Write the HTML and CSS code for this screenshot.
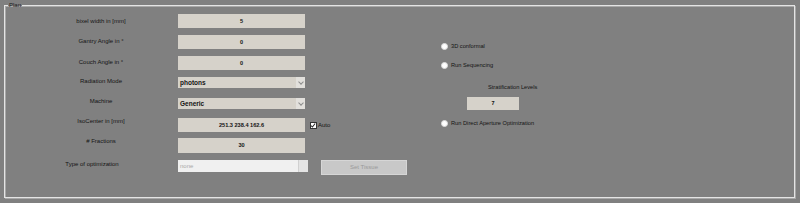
FILE: index.html
```html
<!DOCTYPE html>
<html lang="en">
<head>
  <meta charset="UTF-8">
  <meta name="viewport" content="width=device-width, initial-scale=1.0">
  <title>Plan</title>
  <link rel="stylesheet" href="styles.css">
</head>
<body>
  <fieldset class="panel">
    <legend>Plan</legend>
    <div class="body">
      <div class="form">
        <div class="label first">bixel width in [mm]</div>
        <div class="edit">5</div>
        <div></div>

        <div class="label">Gantry Angle in °</div>
        <div class="edit">0</div>
        <div></div>

        <div class="label">Couch Angle in °</div>
        <div class="edit">0</div>
        <div></div>

        <div class="label mid">Radiation Mode</div>
        <div class="popup"><span>photons</span><i class="arrow"></i></div>
        <div></div>

        <div class="label up">Machine</div>
        <div class="popup"><span>Generic</span><i class="arrow"></i></div>
        <div></div>

        <div class="label up">IsoCenter in [mm]</div>
        <div class="edit">251.3 238.4 162.6</div>
        <label class="check"><span class="box"><svg width="7" height="7" viewBox="0 0 7 7"><path d="M1 3.5 L2.8 5.3 L6 1.2" fill="none" stroke="#222" stroke-width="1.2"/></svg></span>Auto</label>

        <div class="label up"># Fractions</div>
        <div class="edit tall">30</div>
        <div></div>

        <div class="label mid left">Type of optimization</div>
        <div class="popup off"><span>none</span><i class="arrow"></i></div>
        <div class="button">Set Tissue</div>
      </div>

      <div class="options">
        <label class="radio first"><span class="dot"></span>3D conformal</label>
        <label class="radio second"><span class="dot"></span>Run Sequencing</label>
        <div class="strat-label">Stratification Levels</div>
        <div class="edit strat">7</div>
        <label class="radio third"><span class="dot"></span>Run Direct Aperture Optimization</label>
      </div>
    </div>
  </fieldset>
</body>
</html>
```

FILE: styles.css
```css
* {
  margin: 0;
  padding: 0;
  box-sizing: border-box;
}
/* gray MATLAB-like figure */
:root {
  --bg: #808080;
  --field: #d6d2ca;
  --ink: #141414;
}
body {
  width: 800px;
  height: 203px;
  background-color: var(--bg);
  font-family: "Liberation Sans", Arial, sans-serif;
  color: var(--ink);
  overflow: hidden;
}
/* group box */
.panel {
  margin: 1px 5px 0 4px;
  height: 197px;
  border: 1px solid #e4e4e4;
  box-shadow: 1px 1px 0 #a8a8a8, inset 1px 1px 0 #a8a8a8;
  min-width: 0;
}
.panel legend {
  margin-left: 3px;
  padding: 0 1px;
  font-size: 6px;
  line-height: 8px;
  color: #1a1a1a;
}
.body {
  display: flex;
  padding: 5px 0 0 34px;
}
/* labels + fields */
.form {
  display: grid;
  grid-template-columns: 139px 127px 136px;
  grid-template-rows: 21px 21px 21px 21px 20px 20px 22px 15px;
  align-items: start;
}
.label {
  padding-right: 15px;
  text-align: center;
  font-size: 6px;
  line-height: 12px;
}
.label.first {
  margin-top: 1px;
}
.label.mid {
  margin-top: -2px;
}
.label.up {
  margin-top: -3px;
}
.label.left {
  padding-right: 33px;
}
.edit {
  height: 14px;
  background-color: var(--field);
  text-align: center;
  font-size: 5.6px;
  font-weight: bold;
  line-height: 14px;
}
.edit.tall {
  height: 15px;
  line-height: 15px;
}
.popup {
  display: flex;
  align-items: center;
  height: 11px;
  background-color: var(--field);
  font-size: 6.5px;
  font-weight: bold;
  padding-left: 2px;
}
.popup span {
  flex: 1;
}
.popup .arrow {
  width: 9px;
  height: 11px;
  background-color: #e2e0dc;
  position: relative;
}
/* the little chevron in the arrow box */
.popup .arrow::after {
  content: '';
  position: absolute;
  left: 2.5px;
  top: 2.5px;
  width: 3px;
  height: 3px;
  border-right: 1px solid #8c8c8c;
  border-bottom: 1px solid #8c8c8c;
  transform: rotate(45deg);
}
.popup.off {
  width: 130px;
  height: 12px;
  background-color: #f0f0f0;
  color: #a8a8a8;
  font-weight: normal;
  font-size: 6px;
}
.popup.off .arrow {
  height: 12px;
  width: 10px;
  background-color: #e4e4e4;
  border-left: 1px solid #d0d0d0;
}
.popup.off .arrow::after {
  display: none;
}
.check {
  display: flex;
  align-items: center;
  margin: 3px 0 0 5px;
  font-size: 6px;
  line-height: 8px;
}
.check .box {
  display: flex;
  width: 7px;
  height: 7px;
  margin-right: 1px;
  background: #fff;
  border: 1px solid #333;
}
.check .box svg {
  margin: -1px 0 0 -1px;
}
.button {
  margin-left: 16px;
  width: 86px;
  height: 15px;
  background-color: #c8c8c8;
  border: 1px solid #d6d6d6;
  color: #9a9a9a;
  text-align: center;
  font-size: 6px;
  line-height: 13px;
}
/* right column with radios */
.options {
  display: flex;
  flex-direction: column;
  align-items: flex-start;
}
.radio {
  display: flex;
  align-items: center;
  font-size: 5.7px;
  line-height: 8px;
}
.radio .dot {
  width: 7px;
  height: 7px;
  margin-right: 3px;
  border-radius: 50%;
  background: #fff;
  border: 1px solid #dcdcdc;
}
.radio.first {
  margin-top: 28px;
}
.radio.second {
  margin-top: 11px;
}
.radio.third {
  margin-top: 9px;
}
.strat-label {
  margin: 14px 0 0 47px;
  font-size: 5.7px;
  line-height: 8px;
}
.edit.strat {
  margin: 6px 0 0 26px;
  width: 52px;
  height: 13px;
  line-height: 13px;
}
```
